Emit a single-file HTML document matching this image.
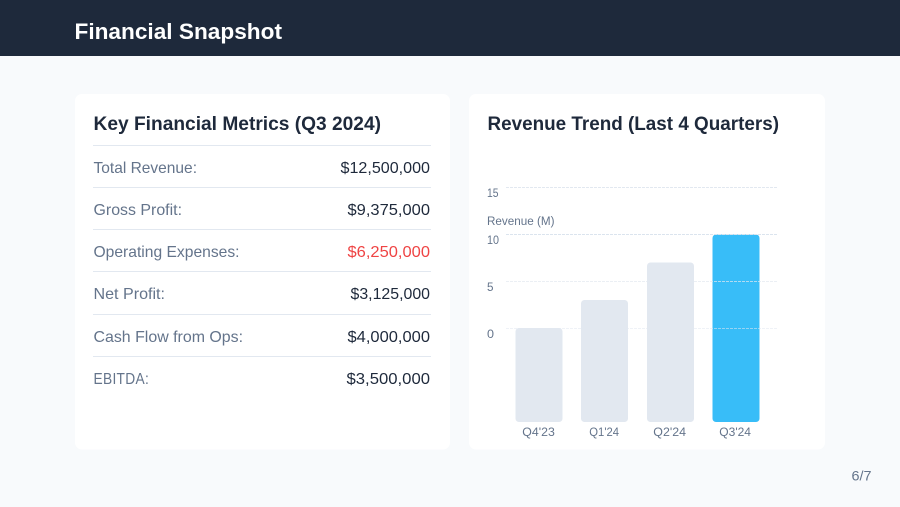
<!DOCTYPE html>
<html lang="en">
<head>
<meta charset="utf-8">
<title>Financial Snapshot</title>
<style>
html,body{margin:0;padding:0;width:900px;height:507px;overflow:hidden;background:#f8fafc}
svg{display:block;font-family:"Liberation Sans",sans-serif}
.l{font-size:16px;fill:#64748b}
.v{font-size:16px;fill:#1e293b}
.t{font-size:19px;font-weight:700;fill:#1e293b}
.a{font-size:11.5px;fill:#64748b}
</style>
</head>
<body>
<svg width="900" height="507" viewBox="0 0 900 507" xmlns="http://www.w3.org/2000/svg">
<rect width="900" height="507" fill="#f8fafc"/>
<rect width="900" height="56" fill="#1e293b"/>
<text x="74.5" y="39" font-size="22" font-weight="700" fill="#fff" textLength="207.5" lengthAdjust="spacingAndGlyphs">Financial Snapshot</text>

<rect x="75" y="94" width="375" height="355.5" rx="7" fill="#fff"/>
<rect x="469" y="94" width="356" height="355.5" rx="7" fill="#fff"/>

<text class="t" x="93.5" y="130" textLength="287.5" lengthAdjust="spacingAndGlyphs">Key Financial Metrics (Q3 2024)</text>
<g fill="#e2e8f0">
<rect x="93" y="145" width="338" height="1"/>
<rect x="93" y="187" width="338" height="1"/>
<rect x="93" y="229" width="338" height="1"/>
<rect x="93" y="271" width="338" height="1"/>
<rect x="93" y="314" width="338" height="1"/>
<rect x="93" y="356" width="338" height="1"/>
</g>
<text class="l" x="93.5" y="173" textLength="103.5" lengthAdjust="spacingAndGlyphs">Total Revenue:</text>
<text class="v" x="340.5" y="173" textLength="89.5" lengthAdjust="spacingAndGlyphs">$12,500,000</text>
<text class="l" x="93.5" y="215" textLength="88.5" lengthAdjust="spacingAndGlyphs">Gross Profit:</text>
<text class="v" x="347.5" y="215" textLength="82.5" lengthAdjust="spacingAndGlyphs">$9,375,000</text>
<text class="l" x="93.5" y="257" textLength="146" lengthAdjust="spacingAndGlyphs">Operating Expenses:</text>
<text class="v" x="347.5" y="257" textLength="82.5" lengthAdjust="spacingAndGlyphs" style="fill:#ef4444">$6,250,000</text>
<text class="l" x="93.5" y="299" textLength="71.5" lengthAdjust="spacingAndGlyphs">Net Profit:</text>
<text class="v" x="350.5" y="299" textLength="79.5" lengthAdjust="spacingAndGlyphs">$3,125,000</text>
<text class="l" x="93.5" y="342" textLength="149.5" lengthAdjust="spacingAndGlyphs">Cash Flow from Ops:</text>
<text class="v" x="347.5" y="342" textLength="82.5" lengthAdjust="spacingAndGlyphs">$4,000,000</text>
<text class="l" transform="translate(93.5 384) scale(.86 1)" letter-spacing=".35">EBITDA:</text>
<text class="v" x="346.5" y="384" textLength="83.5" lengthAdjust="spacingAndGlyphs">$3,500,000</text>

<text class="t" x="487.5" y="130" textLength="291.5" lengthAdjust="spacingAndGlyphs">Revenue Trend (Last 4 Quarters)</text>

<rect x="515.5" y="328" width="47" height="94" rx="3.5" fill="#e2e8f0"/>
<rect x="581" y="300" width="47" height="122" rx="3.5" fill="#e2e8f0"/>
<rect x="647" y="262.5" width="47" height="159.5" rx="3.5" fill="#e2e8f0"/>
<rect x="712.5" y="234.5" width="47" height="187.5" rx="3.5" fill="#38bdf8"/>

<g stroke-width="1" stroke-dasharray="3 1" fill="none">
<path d="M506 187.5H777" stroke="#e2e8f0"/>
<path d="M506 234.5H777" stroke="#dbe4ee"/>
<path d="M506 281.5H777" stroke="#e2e8f0" stroke-opacity=".7"/>
<path d="M506 328.5H777" stroke="#e2e8f0" stroke-opacity=".55"/>
</g>

<text class="a" x="487" y="197" textLength="11.5" lengthAdjust="spacingAndGlyphs">15</text>
<text class="a" x="487" y="225" textLength="67.5" lengthAdjust="spacingAndGlyphs">Revenue (M)</text>
<text class="a" x="487" y="244" textLength="12" lengthAdjust="spacingAndGlyphs">10</text>
<text class="a" x="487" y="291" textLength="6.5" lengthAdjust="spacingAndGlyphs">5</text>
<text class="a" x="487" y="338" textLength="7" lengthAdjust="spacingAndGlyphs">0</text>

<text class="a" x="522.3" y="436" textLength="32.5" lengthAdjust="spacingAndGlyphs">Q4'23</text>
<text class="a" x="589.3" y="436" textLength="29.7" lengthAdjust="spacingAndGlyphs">Q1'24</text>
<text class="a" x="653.3" y="436" textLength="32.7" lengthAdjust="spacingAndGlyphs">Q2'24</text>
<text class="a" x="719.3" y="436" textLength="31.7" lengthAdjust="spacingAndGlyphs">Q3'24</text>

<text x="851.5" y="480.5" font-size="14" fill="#64748b" textLength="20" lengthAdjust="spacingAndGlyphs">6/7</text>
</svg>
</body>
</html>
